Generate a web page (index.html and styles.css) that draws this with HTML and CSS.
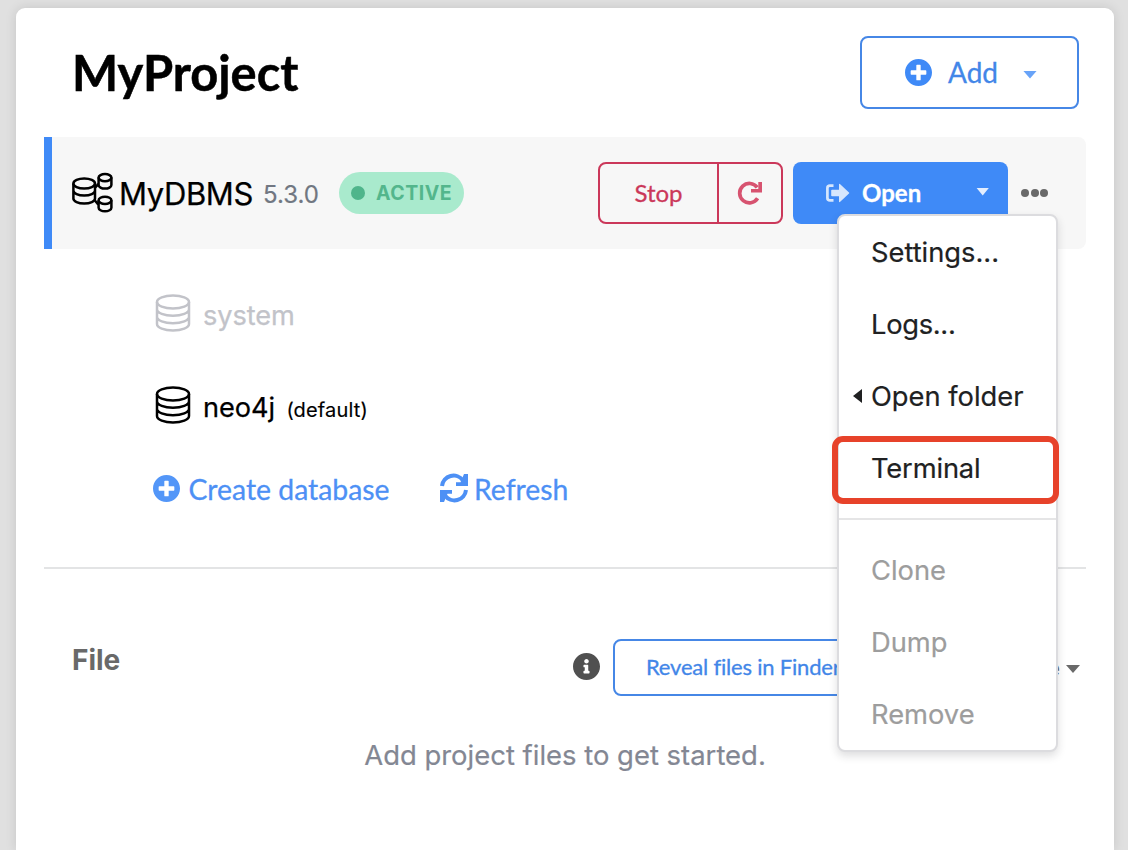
FILE: index.html
```html
<!DOCTYPE html>
<html lang="en">
<head>
<meta charset="utf-8">
<title>MyProject</title>
<link rel="stylesheet" href="styles.css">
</head>
<body>
<svg class="defs" width="0" height="0" aria-hidden="true">
  <symbol id="plus" viewBox="8 8 496 496"><path d="M256 8C119 8 8 119 8 256s111 248 248 248 248-111 248-248S393 8 256 8zm144 276c0 6.600-5.400 12-12 12h-92v92c0 6.600-5.400 12-12 12h-56c-6.600 0-12-5.400-12-12v-92h-92c-6.600 0-12-5.400-12-12v-56c0-6.600 5.400-12 12-12h92v-92c0-6.600 5.400-12 12-12h56c6.600 0 12 5.400 12 12v92h92c6.600 0 12 5.400 12 12v56z"/></symbol>
  <symbol id="database" viewBox="0 0 36 38"><g fill="none" stroke="currentColor" stroke-width="2.500"><ellipse cx="18" cy="8" rx="16" ry="6.500"/><path d="M2 8v22c0 3.700 7.200 6.500 16 6.500s16-2.800 16-6.500V8M2 15.300c0 3.700 7.200 6.500 16 6.500s16-2.800 16-6.500M2 22.700c0 3.700 7.200 6.500 16 6.500s16-2.800 16-6.500"/></g></symbol>
</svg>
<main class="card">
  <header class="head">
    <h1 class="title">MyProject</h1>
    <button class="btn add"><svg class="plus"><use href="#plus"/></svg><span>Add</span><i class="caret"></i></button>
  </header>

  <section class="dbms">
    <svg class="cluster" viewBox="0 0 42 42" fill="none" stroke="currentColor" stroke-width="2.500">
      <ellipse cx="12.200" cy="11.500" rx="10.800" ry="5"/><path d="M1.400 11.500v15c0 2.800 4.800 5 10.800 5s10.800-2.200 10.800-5v-15M1.400 18.500c0 2.800 4.800 5 10.800 5s10.800-2.200 10.800-5"/>
      <ellipse cx="33" cy="5.600" rx="6.400" ry="3.600"/><path d="M26.600 5.600v7.400c0 2 2.900 3.600 6.400 3.600s6.400-1.600 6.400-3.600V5.600"/>
      <ellipse cx="33" cy="28.300" rx="6.400" ry="3.600"/><path d="M26.600 28.300v7.400c0 2 2.900 3.600 6.400 3.600s6.400-1.600 6.400-3.600v-7.400M22.500 16l4.100-4M22.500 28l4.100 5"/>
    </svg>
    <span class="dbms-name">MyDBMS</span>
    <span class="version">5.3.0</span>
    <span class="badge"><i class="dot"></i><span>ACTIVE</span></span>
    <div class="actions">
      <div class="stop-group">
        <button class="stop">Stop</button>
        <button class="restart" aria-label="Restart"><svg width="26" height="26" viewBox="0 0 26 26"><path d="M20.600 18.300A9.700 9.700 0 1 1 20.200 7.400" fill="none" stroke="currentColor" stroke-width="3.700"/><path d="M21.300 2H25v10.500H14V9h7.300z" fill="currentColor"/></svg></button>
      </div>
      <button class="open"><svg class="out" width="25" height="20" viewBox="0 0 25 20"><path d="M8.500 2.600H5Q2.400 2.600 2.400 5v10Q2.400 17.400 5 17.400h3.500" fill="none" stroke="currentColor" stroke-width="2.700"/><path d="M7 6.800h7V1.600q0-1.300 1.200-.4L24 9.400q.6.600 0 1.200l-8.800 8.200q-1.200.9-1.200-.4v-5.200H7q-.8 0-.8-.8V7.600q0-.8.8-.8z" fill="currentColor"/></svg><span>Open</span><i class="caret"></i></button>
      <button class="more" aria-label="More"><i></i><i></i><i></i></button>
    </div>
  </section>

  <section class="databases">
    <div class="db muted"><svg class="db-icon"><use href="#database"/></svg><span class="db-name system">system</span></div>
    <div class="db"><svg class="db-icon"><use href="#database"/></svg><span class="db-name neo">neo4j</span><span class="default">(default)</span></div>
    <div class="links">
      <a class="link"><svg class="plus"><use href="#plus"/></svg><span class="create">Create database</span></a>
      <a class="link refresh"><svg width="30" height="30" viewBox="0 0 30 30"><g fill="none" stroke="currentColor" stroke-width="4"><path d="M3 13A11.600 11.600 0 0 1 24 7.500"/><path d="M27 17A11.600 11.600 0 0 1 6 22.500"/></g><path d="M25 1H29v12H17V9.200h4.500zM1 17h12v3.800H8.500L5 29H1z" fill="currentColor"/></svg><span class="refresh-text">Refresh</span></a>
    </div>
  </section>

  <section class="files">
    <h2 class="file-title">File</h2>
    <div class="file-tools">
      <svg class="info" viewBox="8 8 496 496"><path d="M256 8C119 8 8 119 8 256s111 248 248 248 248-111 248-248S393 8 256 8zm0 110c23.200 0 42 18.800 42 42s-18.800 42-42 42-42-18.800-42-42 18.800-42 42-42zm56 254c0 6.600-5.400 12-12 12h-88c-6.600 0-12-5.400-12-12v-24c0-6.600 5.400-12 12-12h12v-64h-12c-6.600 0-12-5.400-12-12v-24c0-6.600 5.400-12 12-12h64c6.600 0 12 5.400 12 12v100h12c6.600 0 12 5.400 12 12v24z"/></svg>
      <button class="btn reveal"><span>Reveal files in Finder</span></button>
      <span class="sort">Name<i class="caret"></i></span>
    </div>
  </section>
  <p class="empty">Add project files to get started.</p>

  <nav class="menu">
    <a class="item settings">Settings...</a>
    <a class="item logs">Logs...</a>
    <a class="item folder"><i class="left"></i>Open folder</a>
    <a class="item terminal">Terminal</a>
    <hr class="rule">
    <a class="item off clone">Clone</a>
    <a class="item off dump">Dump</a>
    <a class="item off remove">Remove</a>
    <span class="highlight"></span>
  </nav>
</main>
</body>
</html>
```
FILE: styles.css
```css
* { box-sizing: border-box; }
html, body { height: 100%; }
body { margin: 0; padding: 8px 14px 0 16px; background: #e0e0e0; overflow: hidden; font-family: Inter, "Liberation Sans", sans-serif; color: #000; }
button { font: inherit; background: none; padding: 0; margin: 0; }
svg { display: block; flex: none; fill: currentColor; }
.defs { position: absolute; }
.cluster { fill: none; }
i { display: block; flex: none; }

.card { position: relative; height: 100%; padding: 28px 28px 0; background: #fff; border-radius: 9px 9px 0 0; box-shadow: 0 0 12px rgba(0, 0, 0, .12); }
.head { display: flex; justify-content: space-between; padding: 0 7px 0 28px; height: 101px; }
.title { margin: 0; font: 700 48.800px/73px Lato, sans-serif; -webkit-text-stroke: .5px; }
.btn { display: flex; align-items: center; border: 2px solid #4687e6; border-radius: 8px; color: #4286e8; font-family: Lato, sans-serif; }
.add { width: 219px; height: 73px; padding-left: 43px; font-size: 28px; }
.plus { width: 27px; height: 27px; color: #3f8af7; }
.add span { margin-left: 16px; padding-bottom: 2px; -webkit-text-stroke: .3px; }
.caret { width: 14px; height: 8px; background: currentColor; clip-path: polygon(0 0, 100% 0, 50% 100%); }
.add .caret { margin: 4px 0 0 25px; color: #68a3f8; }

.dbms { display: flex; align-items: center; height: 112px; border-left: 8px solid #3f8af7; border-radius: 0 8px 8px 0; background: #f7f7f7; padding-left: 20px; }
.cluster { width: 42px; height: 42px; }
.dbms-name { flex: none; width: 149px; padding: 1px 0 0 5px; font-size: 31px; letter-spacing: -.4px; white-space: nowrap; -webkit-text-stroke: .25px; }
.version { flex: none; width: 76px; padding: 3px 0 0; font-size: 24px; color: #717782; -webkit-text-stroke: .2px; }
.badge { flex: none; display: flex; align-items: center; width: 125px; height: 42px; padding-left: 12px; border-radius: 21px; background: #a9eacd; color: #53b68c; font-size: 19.500px; font-weight: 700; letter-spacing: .5px; }
.dot { width: 14px; height: 14px; margin-right: 11px; border-radius: 50%; background: #4fb58b; }
.actions { display: flex; align-items: center; margin-left: auto; padding-right: 38px; }
.stop-group { display: flex; width: 185px; height: 62px; border: 2px solid #cb385a; border-radius: 8px; color: #cb385a; }
.stop { width: 119px; padding-bottom: 2px; border: 0; border-right: 2px solid #cb385a; color: inherit; font: 24px Lato, sans-serif; -webkit-text-stroke: .3px; }
.restart { flex: 1; display: grid; place-items: center; border: 0; color: #d75370; }
.open { display: flex; align-items: center; width: 215px; height: 62px; margin-left: 10px; padding-left: 32px; border: 0; border-radius: 8px; background: #3f8af7; color: #fff; font: 700 24px Lato, sans-serif; }
.open span { padding-bottom: 2px; -webkit-text-stroke: .3px; }
.out { color: #d6e6fd; margin-right: 12px; }
.open .caret { width: 13px; height: 8px; margin: -3px 0 0 55px; color: #e4eefe; }
.more { display: flex; gap: 1.500px; margin-left: 13px; border: 0; }
.more i { width: 8px; height: 8px; border-radius: 50%; background: #696969; }

.databases { height: 320px; padding: 18px 0 0 109px; border-bottom: 2px solid #e3e4e5; }
.db { display: flex; align-items: center; height: 92px; padding-left: 2px; }
.muted { color: #c2c3c9; }
.db-icon { width: 36px; height: 38px; margin-right: 12px; }
.db-name { padding-top: 4px; font-size: 27.200px; letter-spacing: -.1px; -webkit-text-stroke: .25px; }
.default { margin: 9px 0 0 11.500px; font-size: 20px; letter-spacing: .15px; -webkit-text-stroke: .15px; }
.links { display: flex; align-items: center; height: 74px; }
.link { display: flex; align-items: center; color: #4d90f5; font: 28.350px Lato, sans-serif; -webkit-text-stroke: .3px; }
.link .plus { color: #5396f8; margin-right: 8.500px; }
.create { width: 250.500px; padding-top: 1px; }
.refresh-text { margin-left: 5px; padding-top: 1px; }

.files { display: flex; justify-content: space-between; height: 148px; padding: 70px 6px 0 28px; }
.file-title { margin: 0; height: 44px; font-size: 28px; line-height: 43px; color: #696969; }
.file-tools { display: flex; align-items: center; width: 508px; height: 57px; }
.info { width: 27px; height: 27px; margin: -2px 0 0 1px; color: #505050; }
.reveal { flex: none; width: 264px; height: 57px; margin-left: 13px; padding-left: 31px; font-size: 22px; letter-spacing: -.2px; white-space: nowrap; }
.reveal span { padding-bottom: 2px; -webkit-text-stroke: .3px; }
.sort { display: flex; align-items: center; margin-left: auto; color: #696969; font-size: 22px; }
.sort .caret { margin: 3px 0 0 6px; }
.empty { margin: 21px 0 0; text-align: center; font-size: 27.450px; line-height: 34px; color: #838793; -webkit-text-stroke: .2px; }

.menu { position: absolute; left: 821px; top: 206px; width: 221px; height: 538px; border: 2px solid #dcdcdf; border-radius: 8px; background: #fff; box-shadow: 0 4px 8px rgba(34, 36, 38, .15); color: #202122; }
.item { position: relative; display: block; height: 72px; padding-left: 32px; font-size: 27.300px; line-height: 74px; white-space: nowrap; -webkit-text-stroke: .2px; }
.terminal { letter-spacing: -.15px; }
.logs { letter-spacing: -.3px; }
.off { color: #9d9d9d; }
.rule { height: 2px; margin: 14px 0; border: 0; background: #e5e5e6; }
.left { position: absolute; left: 14px; top: 29px; width: 9px; height: 14px; background: currentColor; clip-path: polygon(100% 0, 100% 100%, 0 50%); }
.highlight { position: absolute; left: -7px; top: 220px; width: 227px; height: 68px; border: 6px solid #e7422a; border-radius: 11px; }
```
